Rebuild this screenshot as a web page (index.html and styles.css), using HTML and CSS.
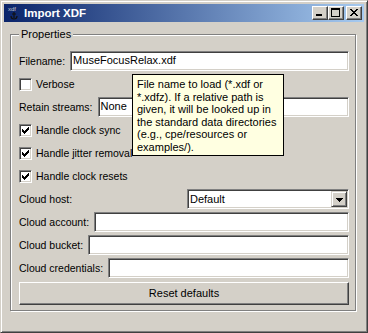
FILE: index.html
```html
<!DOCTYPE html>
<html lang="en">
<head>
    <meta charset="UTF-8">
    <meta name="viewport" content="width=device-width, initial-scale=1.0">
    <title>Import XDF</title>
    <link rel="stylesheet" href="styles.css">
</head>
<body>
    <div class="window">
        <div class="titlebar">
            <svg class="app-icon" width="16" height="16" viewBox="0 0 16 16">
                <text x="2" y="6" font-family="Liberation Sans, sans-serif" font-size="6" fill="#c8c8c8">xdf</text>
                <path d="M8 7v6M6 9h4M5 11q0 3 3 3q3 0 3-3" stroke="#111" stroke-width="1.2" fill="none"/>
            </svg>
            <span class="title">Import XDF</span>
            <div class="caption-buttons">
                <span class="cap-btn">
                    <svg width="14" height="12" viewBox="0 0 14 12" shape-rendering="crispEdges"><rect x="3" y="7" width="6" height="2"/></svg>
                </span>
                <span class="cap-btn">
                    <svg width="14" height="12" viewBox="0 0 14 12" shape-rendering="crispEdges"><path d="M2 1h9v9h-9z M3 3v6h7v-6z" fill-rule="evenodd"/></svg>
                </span>
                <span class="cap-btn close">
                    <svg width="14" height="12" viewBox="0 0 14 12" shape-rendering="crispEdges">
                        <path d="M3 2h2v1h-2z M4 3h2v1h-2z M5 4h2v1h-2z M6 5h2v1h-2z M5 6h2v1h-2z M4 7h2v1h-2z M3 8h2v1h-2z M9 2h2v1h-2z M8 3h2v1h-2z M7 4h2v1h-2z M7 6h2v1h-2z M8 7h2v1h-2z M9 8h2v1h-2z"/>
                    </svg>
                </span>
            </div>
        </div>

        <fieldset class="props">
            <legend>Properties</legend>
            <div class="form">
                <div class="row">
                    <label>Filename:</label>
                    <div class="edit">MuseFocusRelax.xdf</div>
                </div>
                <div class="row">
                    <span class="check"></span>Verbose
                </div>
                <div class="row">
                    <label>Retain streams:</label>
                    <div class="edit">None</div>
                </div>
                <div class="row">
                    <span class="check checked">
                        <svg width="9" height="9" viewBox="0 0 9 9" shape-rendering="crispEdges"><path d="M1 3h1v3h-1z M2 4h1v3h-1z M3 5h1v3h-1z M4 4h1v3h-1z M5 3h1v3h-1z M6 2h1v3h-1z M7 1h1v3h-1z"/></svg>
                    </span>Handle clock sync
                </div>
                <div class="row">
                    <span class="check checked">
                        <svg width="9" height="9" viewBox="0 0 9 9" shape-rendering="crispEdges"><path d="M1 3h1v3h-1z M2 4h1v3h-1z M3 5h1v3h-1z M4 4h1v3h-1z M5 3h1v3h-1z M6 2h1v3h-1z M7 1h1v3h-1z"/></svg>
                    </span>Handle jitter removal
                </div>
                <div class="row">
                    <span class="check checked">
                        <svg width="9" height="9" viewBox="0 0 9 9" shape-rendering="crispEdges"><path d="M1 3h1v3h-1z M2 4h1v3h-1z M3 5h1v3h-1z M4 4h1v3h-1z M5 3h1v3h-1z M6 2h1v3h-1z M7 1h1v3h-1z"/></svg>
                    </span>Handle clock resets
                </div>
                <div class="row split">
                    <label>Cloud host:</label>
                    <div class="edit combo">
                        <span class="combo-text">Default</span>
                        <span class="combo-btn">
                            <svg width="14" height="14" viewBox="0 0 14 14" shape-rendering="crispEdges"><path d="M4 6h7v1h-1v1h-1v1h-1v1h-1v-1h-1v-1h-1v-1h-1z"/></svg>
                        </span>
                    </div>
                </div>
                <div class="row">
                    <label>Cloud account:</label>
                    <div class="edit"></div>
                </div>
                <div class="row">
                    <label>Cloud bucket:</label>
                    <div class="edit"></div>
                </div>
                <div class="row">
                    <label>Cloud credentials:</label>
                    <div class="edit"></div>
                </div>
                <div class="button">Reset defaults</div>
            </div>
        </fieldset>

        <div class="tooltip">File name to load (*.xdf or<br>*.xdfz). If a relative path is<br>given, it will be looked up in<br>the standard data directories<br>(e.g., cpe/resources or<br>examples/).</div>
    </div>
</body>
</html>
```

FILE: styles.css
```css
body {
    margin: 0;
    font-family: "Liberation Sans", Arial, sans-serif;
    font-size: 11px;
    color: #000;
    background-color: #d4d0c8;
}
.window {
    position: relative;
    width: 368px;
    height: 333px;
    box-sizing: border-box;
    padding: 3px;
    background-color: #d4d0c8;
    border: 1px solid;
    border-color: #d4d0c8 #404040 #404040 #d4d0c8;
    box-shadow: inset 1px 1px #fff, inset -1px -1px #808080;
}
.titlebar {
    height: 18px;
    display: flex;
    align-items: center;
    padding: 0 2px;
    background: linear-gradient(to right, #0a246a, #a6caf0);
}
.app-icon {
    display: block;
    margin-right: 2px;
}
.title {
    color: #fff;
    font-weight: bold;
    font-size: 11.5px;
}
.caption-buttons {
    margin-left: auto;
    display: flex;
}
.cap-btn {
    width: 16px;
    height: 14px;
    box-sizing: border-box;
    background-color: #d4d0c8;
    border: 1px solid;
    border-color: #fff #404040 #404040 #fff;
    box-shadow: inset -1px -1px #808080;
}
.cap-btn svg {
    display: block;
}
.cap-btn.close {
    margin-left: 2px;
}
.props {
    width: 346px;
    min-width: 0;
    box-sizing: border-box;
    margin: 6px 0 0 6px;
    padding: 10px 6px 5px 8px;
    border: 1px solid #808080;
    box-shadow: inset 1px 1px #fff, 1px 1px #fff;
}
.props legend {
    padding: 0 2px;
    line-height: 13px;
    background-color: #d4d0c8;
}
.form {
    display: flex;
    flex-direction: column;
    gap: 3px;
    font-size: 10.5px;
}
.row {
    height: 20px;
    display: flex;
    align-items: center;
    gap: 5px;
    white-space: nowrap;
}
.row.split {
    display: grid;
    grid-template-columns: 1fr 1fr;
    gap: 6px;
}
.edit {
    flex: 1;
    height: 20px;
    box-sizing: border-box;
    padding: 0 2px;
    line-height: 16px;
    font-size: 11px;
    background-color: #fff;
    border: 1px solid;
    border-color: #808080 #fff #fff #808080;
    box-shadow: inset 1px 1px #404040, inset -1px -1px #d4d0c8;
    overflow: hidden;
}
.combo {
    display: flex;
    padding: 1px;
}
.combo-text {
    flex: 1;
    padding-left: 1px;
    line-height: 16px;
}
.combo-btn {
    width: 16px;
    height: 16px;
    box-sizing: border-box;
    background-color: #d4d0c8;
    border: 1px solid;
    border-color: #d4d0c8 #404040 #404040 #d4d0c8;
    box-shadow: inset 1px 1px #fff, inset -1px -1px #808080;
}
.combo-btn svg {
    display: block;
}
.check {
    width: 13px;
    height: 13px;
    box-sizing: border-box;
    padding: 1px;
    margin-right: -1px;
    background-color: #fff;
    border: 1px solid;
    border-color: #808080 #fff #fff #808080;
    box-shadow: inset 1px 1px #404040, inset -1px -1px #d4d0c8;
}
.check svg {
    display: block;
}
.button {
    height: 23px;
    margin-top: 1px;
    box-sizing: border-box;
    line-height: 20px;
    font-size: 11px;
    text-align: center;
    border: 1px solid;
    border-color: #fff #404040 #404040 #fff;
    box-shadow: inset -1px -1px #808080;
}
.tooltip {
    position: absolute;
    left: 131px;
    top: 73px;
    width: 152px;
    height: 82px;
    box-sizing: border-box;
    padding: 3px 4px 0 4px;
    line-height: 12.5px;
    white-space: nowrap;
    background-color: #ffffe1;
    border: 1px solid #000;
}
```
